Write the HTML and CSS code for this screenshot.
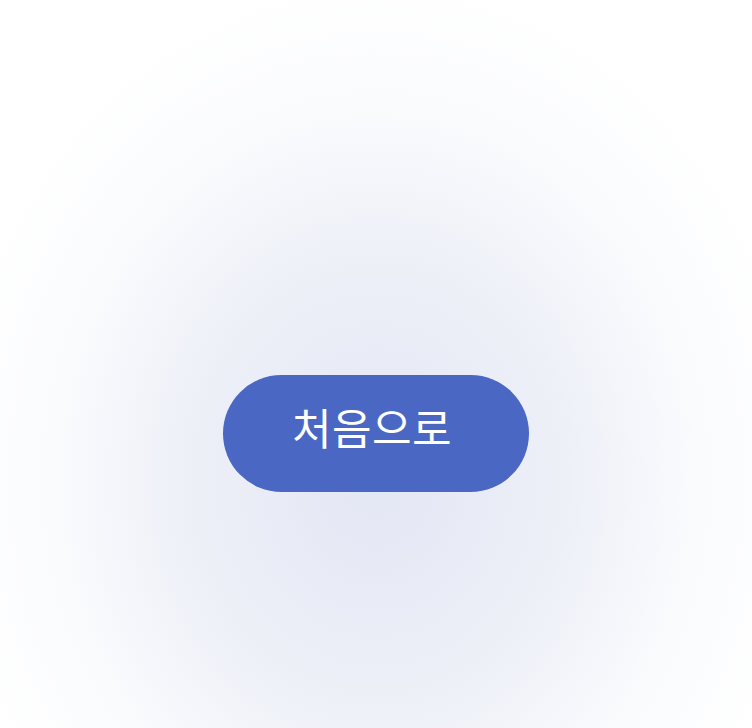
FILE: index.html
```html
<!DOCTYPE html>
<html lang="ko">
<head>
    <meta charset="UTF-8">
    <meta name="viewport" content="width=device-width, initial-scale=1.0">
    <title>처음으로</title>
    <link rel="stylesheet" href="styles.css">
</head>
<body>

<div class="screen">
    <button type="button" class="home-btn">처음으로</button>
</div>

</body>
</html>
```

FILE: styles.css
```css
html, body {
    margin: 0;
    padding: 0;
    height: 100%;
}

body {
    font-family: "Noto Sans CJK KR", "Noto Sans", sans-serif;
    background-color: #fff;
    background-image: radial-gradient(ellipse 430px 500px at 376px 480px, #e3e6f4 0%, #eef0f8 45%, #fafbfd 75%, #fff 100%);
}

.screen {
    box-sizing: border-box;
    height: 100vh;
    padding-top: 139px;
    display: flex;
    justify-content: center;
    align-items: center;
}

.home-btn {
    width: 306px;
    height: 117px;
    padding: 0 8px 16px 0;
    border: none;
    border-radius: 999px;
    background-color: #4a67c4;
    color: #fff;
    font-family: "Noto Sans CJK KR", "Noto Sans", sans-serif;
    font-size: 43px;
    font-weight: 400;
    letter-spacing: 0.5px;
    cursor: pointer;
}
```
